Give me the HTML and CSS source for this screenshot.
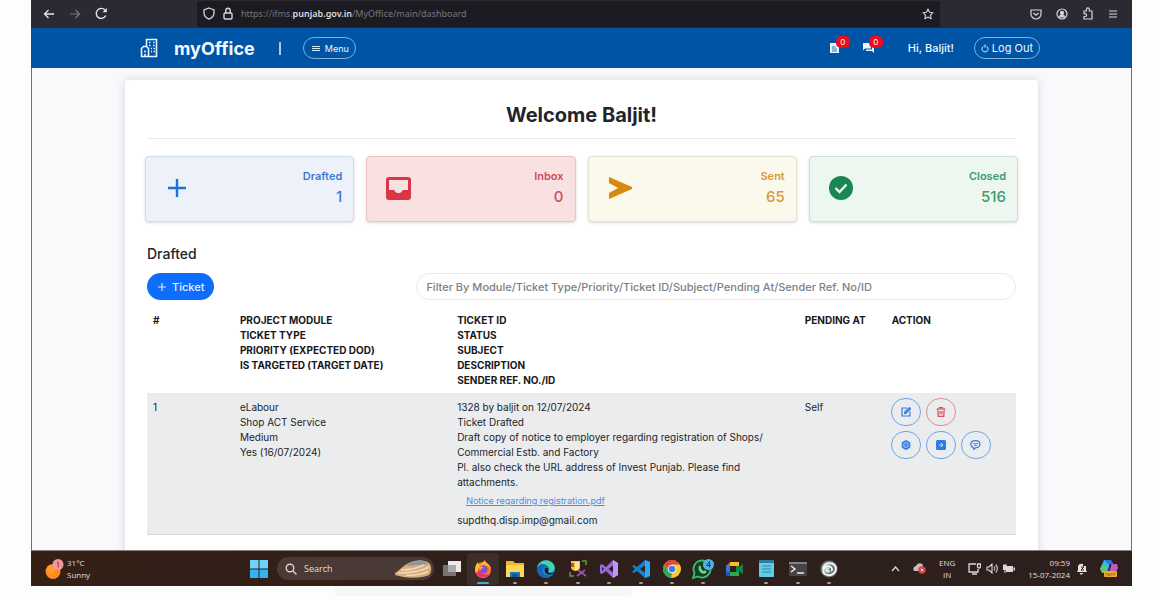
FILE: index.html
```html
<!DOCTYPE html>
<html lang="en">
<head>
<meta charset="utf-8">
<title>myOffice</title>
<link rel="stylesheet" href="styles.css">
</head>
<body>
<div class="screen">
  <div class="browser">
    <div class="browser-nav">
      <button class="icon-btn" aria-label="Back"><svg width="12" height="12" viewBox="0 0 12 12" fill="none" stroke="#e4e4e8" stroke-width="1.3"><path d="M11 6H1.500M5.500 2L1.500 6l4 4"/></svg></button>
      <button class="icon-btn" aria-label="Forward"><svg width="12" height="12" viewBox="0 0 12 12" fill="none" stroke="#77767f" stroke-width="1.2"><path d="M1 6h9.500M6.500 2l4 4-4 4"/></svg></button>
      <button class="icon-btn" aria-label="Reload"><svg width="13" height="13" viewBox="0 0 13 13" fill="none" stroke="#e4e4e8" stroke-width="1.4"><path d="M10.800 8.500A5 5 0 1 1 10 3"/><path d="M11.800 1v4.300H7.500z" fill="#e4e4e8" stroke="none"/></svg></button>
    </div>
    <div class="address">
      <svg width="12" height="13" viewBox="0 0 12 13" fill="none" stroke="#d5d5da" stroke-width="1.3"><path d="M6 1l5 2v3c0 3-2 5-5 6.200C3 11 1 9 1 6V3z"/></svg>
      <svg width="10" height="13" viewBox="0 0 10 13" fill="none" stroke="#d5d5da" stroke-width="1.4"><rect x="1" y="6" width="8" height="6" rx="1"/><path d="M2.800 6V3.500a2.200 2.200 0 0 1 4.400 0V6"/></svg>
      <span class="url">https://ifms.<b>punjab.gov.in</b>/MyOffice/main/dashboard</span>
      <svg width="12" height="12" viewBox="0 0 12 12" fill="none" stroke="#d5d5da" stroke-width="1.1" stroke-linejoin="round"><path d="M6 1l1.500 3.200 3.500.5-2.500 2.500.6 3.600L6 9.100l-3.100 1.700.6-3.600L1 4.700l3.500-.5z"/></svg>
    </div>
    <div class="browser-tools">
      <svg width="12" height="12" viewBox="0 0 12 12" fill="none" stroke="#d5d5da" stroke-width="1.2"><path d="M1 2h10v4a5 5 0 0 1-10 0z"/><path d="M3.500 5L6 7.300 8.500 5"/></svg>
      <svg width="12" height="12" viewBox="0 0 12 12" fill="none" stroke="#d5d5da" stroke-width="1.200"><circle cx="6" cy="6" r="5"/><circle cx="6" cy="4.800" r="1.500" fill="#d5d5da"/><path d="M3.500 9c.4-3 4.600-3 5 0z" fill="#d5d5da"/></svg>
      <svg width="12" height="13" viewBox="0 0 12 13" fill="none" stroke="#d5d5da" stroke-width="1.200" stroke-linejoin="round"><path d="M2 4h2.500V2.300a1.400 1.400 0 0 1 2.800 0V4H10v8H2V9.500h1.200a1.400 1.400 0 0 0 0-2.800H2z"/></svg>
      <svg width="10" height="10" viewBox="0 0 10 10" stroke="#d5d5da" stroke-width="1.100"><path d="M1 2h8M1 5h8M1 8h8"/></svg>
    </div>
  </div>

  <header class="topbar">
    <svg class="brand-icon" width="18" height="20" viewBox="0 0 18 20" fill="none" stroke="#e9f6ff" stroke-width="1.600"><path d="M6.500 8V1.500h10v17h-15V10.500l2-2h3l2 2v8M1 18.500h16"/><path d="M9 4.500h1.500M13 4.500h1.500M9 7.500h1.500M13 7.500h1.500M11 10.500h1M13.500 10.500H15M11 13.500h1M13.500 13.500H15M5 12.500v2M5 16v2"/></svg>
    <span class="brand">myOffice</span>
    <span class="divider"></span>
    <button class="pill menu"><svg width="8" height="7" viewBox="0 0 8 7" stroke="#d8ecff" stroke-width="1"><path d="M0 1.500h8M0 3.500h8M0 5.500h8"/></svg>Menu</button>
    <div class="account">
      <span class="notice"><svg width="9" height="10" viewBox="0 0 9 10"><path d="M0 0h6l3 3v7H0z" fill="#e9f6ff"/><path d="M2 4h3.500M2 6h5M2 8h5" stroke="#0054a6" stroke-width=".8"/></svg><span class="badge">0</span></span>
      <span class="notice"><svg width="11" height="10" viewBox="0 0 11 10" fill="#e9f6ff"><path d="M0 0h8v5.500H2L0 7.500z"/><path d="M9 2h2v8L9 8H3V6.500h6z"/></svg><span class="badge">0</span></span>
      <span class="hello">Hi, Baljit!</span>
      <button class="pill logout"><svg width="8" height="9" viewBox="0 0 8 9" fill="none" stroke="#e9f6ff"><path d="M2.500 2.300a3 3 0 1 0 3 0M4 .5v3"/></svg>Log Out</button>
    </div>
  </header>

  <main class="page">
    <section class="card">
      <h1>Welcome Baljit!</h1>
      <div class="tiles">
        <div class="tile drafted">
          <svg width="18" height="18" viewBox="0 0 18 18" stroke="#1b6fe0" stroke-width="2.400"><path d="M9 0v18M0 9h18"/></svg>
          <div class="stat"><span>Drafted</span><strong>1</strong></div>
        </div>
        <div class="tile inbox">
          <svg width="25" height="23" viewBox="0 0 25 23"><rect width="25" height="23" rx="3" fill="#dc3545"/><path d="M3 3h19v10h-4.500c-.8 0-1 .6-1.600 1.400-1.700 2.200-5.100 2.200-6.800 0C8.500 13.600 8.300 13 7.500 13H3z" fill="#f9e1e2"/></svg>
          <div class="stat"><span>Inbox</span><strong>0</strong></div>
        </div>
        <div class="tile sent">
          <svg width="24" height="22" viewBox="0 0 24 22"><path d="M1 0l23 10v2L1 22V16l9-5L1 6z" fill="#d88a0e"/></svg>
          <div class="stat"><span>Sent</span><strong>65</strong></div>
        </div>
        <div class="tile closed">
          <svg width="24" height="24" viewBox="0 0 24 24"><circle cx="12" cy="12" r="12" fill="#198754"/><path d="M6.500 12l4 4 7-7.500" fill="none" stroke="#ebf7ef" stroke-width="2.400"/></svg>
          <div class="stat"><span>Closed</span><strong>516</strong></div>
        </div>
      </div>

      <div class="list">
        <h2>Drafted</h2>
        <div class="toolbar">
          <button class="new-ticket"><svg width="8" height="8" viewBox="0 0 8 8" stroke="#d8e8ff" stroke-width="1.200"><path d="M4 0v8M0 4h8"/></svg>Ticket</button>
          <input class="filter" type="text" aria-label="Filter tickets" placeholder="Filter By Module/Ticket Type/Priority/Ticket ID/Subject/Pending At/Sender Ref. No/ID">
        </div>
        <table class="tickets">
          <colgroup><col class="c-num"><col class="c-module"><col class="c-ticket"><col class="c-pending"><col class="c-action"></colgroup>
          <thead>
            <tr>
              <th>#</th>
              <th>PROJECT MODULE<br>TICKET TYPE<br>PRIORITY (EXPECTED DOD)<br>IS TARGETED (TARGET DATE)</th>
              <th>TICKET ID<br>STATUS<br>SUBJECT<br>DESCRIPTION<br>SENDER REF. NO./ID</th>
              <th>PENDING AT</th>
              <th>ACTION</th>
            </tr>
          </thead>
          <tbody>
            <tr>
              <td>1</td>
              <td>eLabour<br>Shop ACT Service<br>Medium<br>Yes (16/07/2024)</td>
              <td>1328 by baljit on 12/07/2024<br>Ticket Drafted<br>Draft copy of notice to employer regarding registration of Shops/<br>Commercial Estb. and Factory<br>Pl. also check the URL address of Invest Punjab. Please find<br>attachments.
                <div class="attachment"><a href="#">Notice regarding registration.pdf</a></div>
                supdthq.disp.imp@gmail.com</td>
              <td>Self</td>
              <td class="actions-cell">
                <div class="actions">
                  <button class="round" aria-label="Edit"><svg width="10" height="10" viewBox="0 0 10 10" fill="none" stroke="currentColor" stroke-width="1.200"><path d="M6 1H1v8h8V4.500"/><path d="M3.500 6.500l.4-1.800L8.300.6l1.200 1.200-4.300 4.300z" fill="#6ea5ee"/></svg></button>
                  <button class="round danger" aria-label="Delete"><svg width="10" height="10" viewBox="0 0 10 10" fill="none" stroke="currentColor" stroke-width="1.200"><path d="M.5 2h9M3.500 2V.7h3V2M1.800 2l.4 7.300h5.600L8.200 2M4 4v3.500M6 4v3.500"/></svg></button>
                </div>
                <div class="actions">
                  <button class="round" aria-label="Settings"><svg width="10" height="10" viewBox="0 0 10 10" fill="none" stroke="currentColor"><circle cx="5" cy="5" r="3.700" stroke-width="1.500" fill="#8db8f2"/><circle cx="5" cy="5" r="1.300"/><path d="M5 0v2M5 8v2M.7 2.500l1.600 1M7.700 6.500l1.600 1M.7 7.500l1.600-1M7.700 3.500l1.600-1"/></svg></button>
                  <button class="round" aria-label="Forward ticket"><svg width="10" height="10" viewBox="0 0 10 10"><rect width="10" height="10" rx="1.500" fill="currentColor"/><path d="M3 5h4M5 3l2 2-2 2" fill="none" stroke="#cfe0f6"/></svg></button>
                  <button class="round" aria-label="Comment"><svg width="11" height="10" viewBox="0 0 11 10" fill="none" stroke="currentColor" stroke-width="1.200"><path d="M3.500 7.800C-.5 6-.2.700 5.500.700s6.200 7 0 7.100L3.700 9.500z"/><path d="M3 3.700h5M4 5.500h3" stroke-width=".9"/></svg></button>
                </div>
              </td>
            </tr>
          </tbody>
        </table>
      </div>
    </section>
  </main>

  <footer class="taskbar">
    <div class="weather">
      <svg width="19" height="20" viewBox="0 0 19 20"><circle cx="8" cy="12.500" r="7.500" fill="#ff8a1f"/><circle cx="6" cy="10" r="4" fill="#ffad3c" opacity=".5"/><circle cx="13" cy="5.500" r="5.500" fill="#f3979f"/><path d="M12 4l1.200-1V8.500" stroke="#8d3a48" fill="none"/></svg>
      <div class="two-line"><span>31°C</span><span>Sunny</span></div>
    </div>
    <div class="dock">
      <svg class="start" width="18" height="18" viewBox="0 0 18 18"><path d="M0 0h8.500v8.500H0zM9.500 0H18v8.500H9.500z" fill="#6dd3fb"/><path d="M0 9.500h8.500V18H0zM9.500 9.500H18V18H9.500z" fill="#35b4f3"/></svg>
      <div class="search">
        <svg width="12" height="12" viewBox="0 0 12 12" fill="none" stroke="#d9d2cf" stroke-width="1.400"><circle cx="5" cy="5" r="3.800"/><path d="M8 8l3.500 3.500"/></svg>
        <span>Search</span>
        <svg class="art" width="37" height="18" viewBox="0 0 37 18"><path d="M0 13C6 9 10 4 16 2s12-3 18 1c3 3 3 9 0 12-9 4-25 3-34 0z" fill="#d5ae80"/><path d="M11 6C18 0 27-1 33 4l-9 1z" fill="#8998a2"/><path d="M3 13c9 0 22-1 31-6M6 10c9 0 17-2 23-5M11 15.500c8 0 16-1 22-4" stroke="#f2d9b4" fill="none" stroke-width="1.500"/></svg>
      </div>
      <div class="apps">
        <span class="app plain"><svg width="18" height="18" viewBox="0 0 18 18"><rect y="5" width="13" height="11" fill="#777475"/><rect x="5" y="1" width="13" height="11" fill="#eceaeb"/><rect x="5" y="5" width="8" height="7" fill="#aaa8a9"/></svg></span>
        <span class="app active"><svg width="18" height="18" viewBox="0 0 18 18"><circle cx="9" cy="10" r="8" fill="#ff7a2b"/><path d="M1 9c0-2 1-5 3-7 0 2 1 2 2 3l5-5c0 3 5 4 6 9 0 0-4-5-9-4S3 13 7 16C3 15 1 12 1 9z" fill="#ffb92e"/><path d="M2 13c2 5 10 6 14 1-5 1-9 1-11-4z" fill="#ee2c72"/><circle cx="9.500" cy="9.500" r="4" fill="#8050d4"/><path d="M5 7c2-1 4 0 5 1-2 0-3 1-4 3z" fill="#ffa22b"/></svg></span>
        <span class="app"><svg width="18" height="16" viewBox="0 0 18 16"><path d="M0 0h7l2 2h9v14H0z" fill="#efb52c"/><path d="M0 4h18v12H0z" fill="#ffd45b"/><path d="M4 11h10v5H4z" fill="#167bb8"/><path d="M6 13h6v3H6z" fill="#0d5a97"/></svg></span>
        <span class="app"><svg width="18" height="18" viewBox="0 0 18 18"><circle cx="9" cy="9" r="9" fill="#1585d0"/><path d="M0 8C1-1 14-2 17 5c2 5-1 8-6 7 3-3 1-7-4-7-4 0-7 3-7 3z" fill="#44d6a0"/><path d="M0 8c2-5 8-5 11-1-4-1-7 2-5 6 2 3 6 3 9 2-3 4-8 4-12 1C1 14 0 11 0 8z" fill="#1268b5"/><path d="M8 8c3-1 4 1 3 4 2 2 4 1 6 0-3 5-11 2-9-4z" fill="#251916"/></svg></span>
        <span class="app"><svg width="18" height="18" viewBox="0 0 18 18" fill="none"><path d="M2 1h9v7c-2 4-7 4-9 0z" fill="#f6c64a"/><path d="M6 2h4v8H6z" fill="#ffe28b"/><path d="M2 3h3v4H2z" fill="#c7463b"/><path d="M13 1h4v4M1 12v4h4" stroke="#5a9e42" stroke-width="1.500"/><path d="M8 16l8-6M9 10l8 6" stroke="#9558a8" stroke-width="1.700"/></svg></span>
        <span class="app"><svg width="18" height="18" viewBox="0 0 18 18"><path d="M13 0l5 3v12l-5 3-7-7-4 3-2-1V5l2-1 4 3z" fill="#9866df"/><path d="M2 7v4l2-2zM13 5.500L8.500 9l4.500 3.500z" fill="#302019"/><path d="M13 0l5 3v12l-5 3z" fill="#c195f7"/></svg></span>
        <span class="app"><svg width="18" height="18" viewBox="0 0 18 18"><path d="M13 0l5 2v14l-5 2L5 11l-3 2-2-1 3-3-3-3 2-1 3 2z" fill="#157fc9"/><path d="M13 5.500L8 9l5 3.500z" fill="#302019"/><path d="M13 0l5 2v14l-5 2z" fill="#35a6ee"/></svg></span>
        <span class="app"><svg width="18" height="18" viewBox="0 0 18 18"><circle cx="9" cy="9" r="9" fill="#f7c934"/><path d="M1.200 4.500a9 9 0 0 1 15.600 0H9L5.500 11z" fill="#e5483b"/><path d="M1.200 4.500L5.500 11.500 9 13l-1 5A9 9 0 0 1 1.200 4.500z" fill="#35a556"/><circle cx="9" cy="9" r="4.300" fill="#f4f5f7"/><circle cx="9" cy="9" r="3.300" fill="#3b7de2"/></svg></span>
        <span class="app"><svg width="22" height="20" viewBox="0 0 22 20"><path d="M1 19l1.500-5A8.500 8.500 0 1 1 6 17.500z" fill="#153f2b" stroke="#35c463" stroke-width="1.800"/><path d="M7 7c1-1 2 0 2 2 0 1 2 3 3 3 2-1 3 0 2 2-4 3-9-3-7-7z" fill="#65dd85"/><circle cx="16.500" cy="5.500" r="5.500" fill="#54afe8"/><path d="M17.500 8.500v-6l-3 4h4.500" fill="none" stroke="#164569"/></svg></span>
        <span class="app plain"><svg width="17" height="14" viewBox="0 0 17 14"><path d="M4 0h9v4H4z" fill="#f6bd27"/><path d="M0 4l4-4v4z" fill="#e5483b"/><path d="M0 4h4v6H0z" fill="#3478df"/><path d="M0 10h4v4H1l-1-1z" fill="#1d58b5"/><path d="M4 10h9v4H4z" fill="#27a854"/><path d="M10 4h3v6h-3zM13 5l4-3v10l-4-3z" fill="#148442"/></svg></span>
        <span class="app"><svg width="15" height="17" viewBox="0 0 15 17"><rect width="15" height="17" rx="1" fill="#66cbe8"/><path d="M0 0h15v3H0z" fill="#2d7c9d"/><path d="M3 6h9M3 9h9M3 12h9" stroke="#228ba9"/></svg></span>
        <span class="app"><svg width="18" height="14" viewBox="0 0 18 14"><rect width="18" height="14" rx="1" fill="#464546"/><path d="M0 0h18v2H0z" fill="#858284"/><path d="M2 4l4 3-4 3M8 11h7" stroke="#f1eded" fill="none" stroke-width="1.400"/></svg></span>
        <span class="app"><svg width="18" height="18" viewBox="0 0 18 18"><circle cx="9" cy="9" r="8.500" fill="#70777a"/><path d="M3 9c0-7 11-8 13-1 0 6-6 9-11 6-3-2-2-7 3-8 3 0 5 3 3 5" fill="none" stroke="#f1f4f4" stroke-width="2"/><path d="M5 12c-1-4 3-6 6-4l-2 5z" fill="#d9e6de"/><path d="M8 9l3-1v3z" fill="#427f62"/></svg></span>
      </div>
    </div>
    <div class="tray">
      <svg width="9" height="6" viewBox="0 0 9 6" fill="none" stroke="#ddd7d5" stroke-width="1.300"><path d="M1 5l3.500-4L8 5"/></svg>
      <svg width="13" height="11" viewBox="0 0 13 11"><path d="M1 8C-1 5 2 3 3 3c2-4 7-3 7 0v5z" fill="#c5c0bf"/><circle cx="9" cy="7" r="3.700" fill="#dd3f43"/><path d="M7.700 5.700l2.600 2.600M10.300 5.700L7.700 8.300" stroke="#fff" stroke-width=".8"/></svg>
      <div class="two-line center"><span>ENG</span><span>IN</span></div>
      <div class="status">
        <svg width="13" height="12" viewBox="0 0 13 12" fill="none" stroke="#ddd7d5" stroke-width="1.300"><path d="M8 1H1v8h9V6M4 11h5M9.500 1h3v2.500a1.500 1.500 0 0 1-3 0z"/></svg>
        <svg width="12" height="11" viewBox="0 0 12 11" fill="none" stroke="#ddd7d5" stroke-width="1.100"><path d="M1 4h2l3-3v9L3 7H1zM8 3.500c1 1 1 3 0 4M9.800 1.500c2 2 2 6 0 8"/></svg>
        <svg width="12" height="9" viewBox="0 0 12 9" fill="#ddd7d5"><path d="M3 2h7v6H3zM10.500 3.500H12v3h-1.500zM0 1h3v5H0z"/><path d="M1 0v2M3 0v2M2 6v3" stroke="#ddd7d5"/></svg>
      </div>
      <div class="two-line right"><span>09:59</span><span>15-07-2024</span></div>
      <svg width="11" height="12" viewBox="0 0 11 12"><path d="M1 9l1-2V4c0-3 3-4 5-3v2h3v4l1 2zM3.500 10h4L5 12z" fill="#e5e0df"/><path d="M5 4h3L5 7h3" stroke="#302019" fill="none"/></svg>
      <svg class="copilot" width="18" height="17" viewBox="0 0 18 17"><path d="M4 0h7L7 13H3L0 9z" fill="#34b9e8"/><path d="M11 0l2 4h4l1 4-4 7H8l4-12z" fill="#c455c9"/><path d="M4 0h7l2 4H8z" fill="#3177e4"/><path d="M0 9l2-4 5 1-2 7H2z" fill="#65c864"/><rect x="4" y="11" width="13" height="6" rx="1" fill="#efaa29"/><path d="M6 13v2.500M8 13v2.500h2V13M12 13v2.500M14 15.500V13h1.500" stroke="#8a5410" stroke-width=".7" fill="none"/></svg>
    </div>
  </footer>
</div>
<div class="under"></div>
</body>
</html>
```
FILE: styles.css
```css
* { box-sizing: border-box; }
body {
  margin: 0;
  height: 100vh;
  display: flex;
  flex-direction: column;
  background: #fdfdfd;
  font-family: Inter, "Liberation Sans", sans-serif;
  color: #212529;
  overflow: hidden;
}
button, input { font-family: inherit; margin: 0; }
svg { flex: none; display: block; }
.screen {
  flex: 1;
  min-height: 0;
  margin: 0 26px 0 31px;
  display: flex;
  flex-direction: column;
}
.under {
  width: 297px;
  height: 10px;
  margin: 0 0 4px 335px;
  background: #f7f7f7;
  border-radius: 0 0 4px 4px;
}

.browser {
  height: 28px;
  flex: none;
  padding-bottom: 1px;
  display: flex;
  align-items: center;
  background: #2b2a33;
}
.browser-nav { width: 166px; padding-left: 12px; display: flex; gap: 14px; }
.icon-btn { padding: 0; border: 0; background: none; display: flex; align-items: center; }
.address {
  flex: 1;
  height: 26px;
  padding: 0 6px;
  display: flex;
  align-items: center;
  gap: 8px;
  background: #1c1b22;
}
.url { flex: 1; font: 9px "Noto Sans", sans-serif; color: #77767e; }
.url b { color: #dcdce0; font-weight: 600; }
.browser-tools { width: 192px; padding-right: 14px; display: flex; justify-content: flex-end; align-items: center; gap: 14px; }

.topbar {
  height: 40px;
  flex: none;
  padding: 0 92px 0 109px;
  display: flex;
  align-items: center;
  background: #0054a6;
  color: #f0f8ff;
}
.brand { margin-left: 16px; font-size: 18px; font-weight: 700; }
.divider { width: 2px; height: 13px; margin: 0 22px 0 24px; background: #a9c9e8; }
.pill {
  height: 22px;
  display: flex;
  align-items: center;
  border: 1px solid #7fb0de;
  border-radius: 11px;
  background: none;
  color: #e9f6ff;
  white-space: nowrap;
}
.menu { padding: 0 6px 0 8px; gap: 5px; font-size: 9px; }
.logout { padding: 0 6px; gap: 3px; font-size: 11px; }
.account { margin-left: auto; display: flex; align-items: center; }
.notice { position: relative; margin-right: 24px; }
.badge {
  position: absolute;
  left: 6px;
  top: -7px;
  width: 14px;
  height: 12px;
  border-radius: 5px;
  background: #ec0c1c;
  color: #fff;
  font-size: 8px;
  line-height: 12px;
  text-align: center;
}
.hello { margin: 0 20px 0 10px; font-size: 11px; font-weight: 500; }

.page {
  flex: 1;
  min-height: 0;
  overflow: hidden;
  padding: 12px 93px 0;
  background: #f9f9fc;
  border: solid #6c7078;
  border-width: 0 1px;
}
.card {
  min-height: 100%;
  padding: 0 20px 24px;
  background: #fff;
  border-radius: 4px 4px 0 0;
  box-shadow: 0 0 8px #d3d5da;
}
h1 {
  margin: 0 2px;
  height: 59px;
  padding-top: 11px;
  border-bottom: 1px solid #e9eaec;
  font-size: 20px;
  line-height: 48px;
  font-weight: 700;
  text-align: center;
}
.tiles { margin-top: 17px; display: grid; grid-template-columns: repeat(4, 1fr); gap: 12px; }
.tile {
  height: 66px;
  padding: 0 11px 2px 19px;
  display: flex;
  justify-content: space-between;
  align-items: center;
  border: 1px solid;
  border-radius: 4px;
  box-shadow: 0 1px 3px #d9dadd;
}
.stat { display: flex; flex-direction: column; align-items: flex-end; font-size: 11px; line-height: 18px; font-weight: 600; }
.stat strong { font-size: 15px; line-height: 24px; font-weight: 500; }
.drafted { background: #edf2fa; border-color: #d3dcea; color: #3a7bd0; padding-left: 22px; }
.inbox { background: #f9e1e2; border-color: #e9c3c6; color: #cf4c5b; }
.sent { background: #faf9eb; border-color: #e3e3d3; color: #d79a38; }
.closed { background: #ebf7ef; border-color: #cfe1d6; color: #409a70; }

.list { margin: 0 2px; }
h2 { margin: 21px 0 8px; font-size: 14px; line-height: 22px; font-weight: 500; }
.toolbar { display: flex; justify-content: space-between; align-items: center; }
.new-ticket {
  height: 27px;
  padding: 0 10px 0 11px;
  display: flex;
  align-items: center;
  gap: 6px;
  border: 0;
  border-radius: 14px;
  background: #0d6efd;
  color: #e6f0ff;
  font-size: 11px;
  font-weight: 500;
}
.filter {
  width: 69%;
  height: 27px;
  padding: 0 9px;
  border: 1px solid #e9eaec;
  border-radius: 14px;
  background: #fff;
  font-size: 11px;
  font-weight: 500;
}
.filter::placeholder { color: #7b8187; opacity: 1; }

.tickets { width: 100%; margin-top: 6px; table-layout: fixed; border-collapse: collapse; font-size: 10px; line-height: 15px; }
.c-num, .c-pending { width: 10%; }
.c-module { width: 25%; }
.c-ticket { width: 40%; }
.c-action { width: 15%; }
th, td { padding: 7px 6px 5px; text-align: left; vertical-align: top; white-space: nowrap; }
th { font-weight: 700; color: #16181b; }
tbody tr { background: #ebecee; border-bottom: 1px solid #d4d6d9; }
td { padding-bottom: 6px; }
.attachment { padding: 4px 9px 5px; line-height: 14px; font-size: 9px; }
.attachment a { color: #4a8de8; }
.actions-cell { padding: 5px; }
.actions { display: flex; gap: 5px; margin-bottom: 5px; }
.round {
  width: 30px;
  height: 28px;
  padding: 0;
  display: flex;
  align-items: center;
  justify-content: center;
  border: 1px solid #6ea3e8;
  border-radius: 15px;
  background: none;
  color: #2f7be8;
}
.danger { border-color: #e58a92; color: #dc4f5c; }

.taskbar {
  height: 36px;
  flex: none;
  padding: 0 14px;
  display: flex;
  align-items: center;
  background: linear-gradient(90deg, #352016, #2e1f1b 50%, #2c201e);
  border-top: 1px solid #86807e;
  color: #e5dfdc;
  font-family: "Open Sans", sans-serif;
  font-size: 8px;
}
.weather { width: 205px; display: flex; align-items: center; gap: 3px; }
.two-line { display: flex; flex-direction: column; line-height: 12px; white-space: nowrap; }
.center { text-align: center; }
.right { text-align: right; }
.dock { display: flex; align-items: center; }
.search {
  width: 157px;
  height: 23px;
  margin: 0 2px 0 9px;
  padding: 0 2px 0 8px;
  display: flex;
  align-items: center;
  gap: 7px;
  border-radius: 12px;
  background: #4a3a35;
  font-size: 9px;
}
.art { margin-left: auto; }
.apps { width: 409px; display: flex; }
.app {
  position: relative;
  flex: 1;
  height: 32px;
  display: flex;
  align-items: center;
  justify-content: center;
}
.app::after {
  content: "";
  position: absolute;
  bottom: 1px;
  width: 4px;
  height: 2px;
  border-radius: 1px;
  background: #a49a96;
}
.plain::after { display: none; }
.active { background: #3d2d28; border-radius: 3px; }
.active::after { width: 12px; background: #4ea6d6; }
.tray { flex: 1; display: flex; align-items: center; justify-content: flex-end; gap: 13px; }
.status { display: flex; align-items: center; gap: 5px; }
.right + svg { margin-left: -7px; }
```
